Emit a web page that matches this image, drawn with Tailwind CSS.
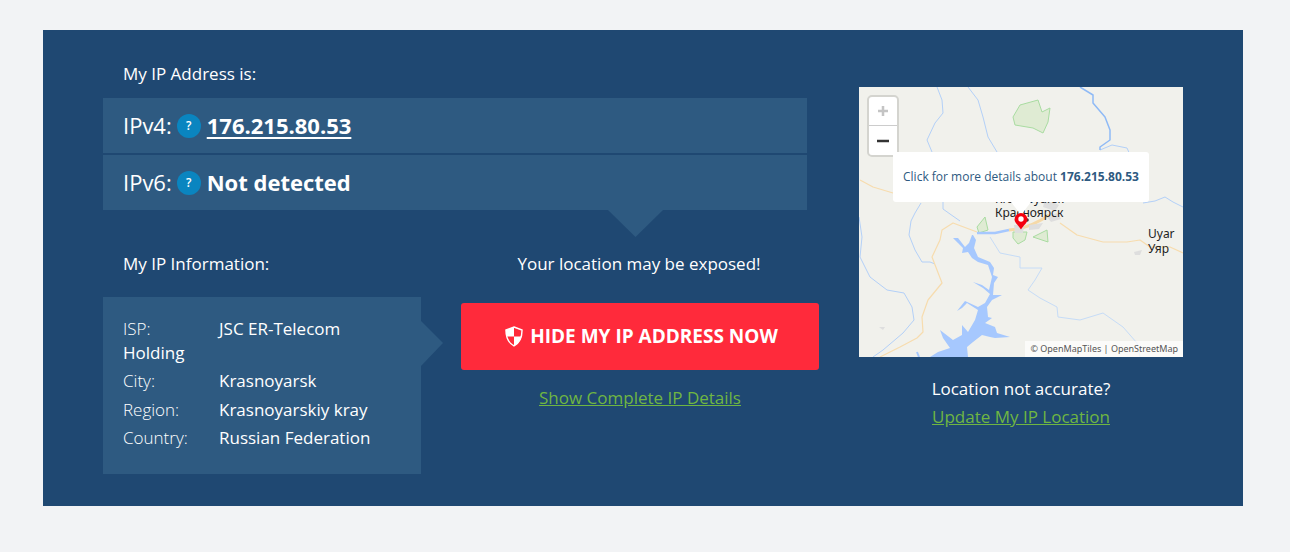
<!doctype html>
<html><head><meta charset="utf-8"><script src="https://cdn.jsdelivr.net/npm/@tailwindcss/browser@4"></script></head>
<body class="bg-[#f2f3f5] h-[552px] overflow-hidden font-['Open_Sans',sans-serif] text-white">
<div class="pt-[30px] pl-[43px]">
<section class="bg-[#1f4872] w-[1200px] h-[476px] pt-[32px] pl-[60px] flex">
  <div class="w-[716px] shrink-0">
    <div class="pl-[20px] text-[17px] leading-[24px]">My IP Address is:</div>
    <div class="w-[704px] mt-[12px] flex flex-col gap-[2px]">
      <div class="h-[55px] bg-[#2e5a81] pl-[20px] flex items-center text-[22px]">IPv4:<span class="ml-[5px] w-[24px] h-[24px] rounded-full bg-[#0a85c0] text-[12px] font-semibold flex items-center justify-center">?</span><a class="ml-[6px] font-bold text-[22px] underline underline-offset-[3px]">176.215.80.53</a></div>
      <div class="h-[55px] bg-[#2e5a81] pl-[20px] flex items-center text-[22px] relative">IPv6:<span class="ml-[5px] w-[24px] h-[24px] rounded-full bg-[#0a85c0] text-[12px] font-semibold flex items-center justify-center">?</span><b class="ml-[6px] font-bold text-[22px]">Not detected</b>
        <svg class="absolute left-[505px] top-[55px]" width="55" height="27"><path d="M0 0H55L27.500 27Z" fill="#2e5a81"/></svg>
      </div>
    </div>
    <div class="flex mt-[42px]">
      <div class="w-[358px] shrink-0">
        <div class="pl-[20px] text-[17px] leading-[24px]">My IP Information:</div>
        <div class="relative mt-[21px] w-[318px] h-[177px] bg-[#2e5a81] pl-[20px] pt-[20px] text-[17px]">
          <div class="leading-[24px]"><span class="inline-block w-[96px] font-light">ISP:</span>JSC ER-Telecom<br>Holding</div>
          <div class="leading-[24px] mt-[4px]"><span class="inline-block w-[96px] font-light">City:</span>Krasnoyarsk</div>
          <div class="leading-[24px] mt-[5px]"><span class="inline-block w-[96px] font-light">Region:</span>Krasnoyarskiy kray</div>
          <div class="leading-[24px] mt-[4px]"><span class="inline-block w-[96px] font-light">Country:</span>Russian Federation</div>
          <svg class="absolute left-[318px] top-[24px]" width="23" height="46"><path d="M0 0L22 22L0 45Z" fill="#2e5a81"/></svg>
        </div>
      </div>
      <div class="w-[358px] shrink-0 flex flex-col items-center">
        <div class="text-[17px] leading-[24px] ml-[-2px]">Your location may be exposed!</div>
        <a class="mt-[27px] w-[358px] h-[67px] rounded-[3px] bg-[#ff2a3b] flex items-center justify-center font-bold text-[19px] uppercase pl-[3px]">
          <svg class="mr-[7px]" width="18" height="21" viewBox="0 0 19 22"><path d="M9.500 1L18 4.200C18 11.500 16 17.500 9.500 21C3 17.500 1 11.500 1 4.200Z" fill="none" stroke="#fff" stroke-width="1.500"/><path d="M9.500 1L1 4.200C1 6.800 1.200 9 1.700 11H9.500ZM9.500 11V21C14.500 18.500 16.600 15 17.400 11Z" fill="#fff"/></svg>Hide my IP Address now</a>
        <a class="mt-[16px] text-[17px] leading-[24px] text-[#6fb642] underline">Show Complete IP Details</a>
      </div>
    </div>
  </div>
  <div class="ml-[40px] w-[324px] pt-[25px] flex flex-col items-center">
    <div class="relative w-[324px] h-[270px] bg-[#f1f1ec] overflow-hidden shrink-0">
      <svg class="absolute inset-0" width="324" height="270" viewBox="0 0 324 270" fill="none" stroke-linejoin="round">
        <g stroke="#b3d0f8" stroke-width="1">
          <path d="M78 0L83 13L84 26L76 36L68 53L73 65"/>
          <path d="M62 116L56 126L52 134L50 148L56 163L63 175L71 175L76 177"/>
          <path d="M109 0L119 13L124 30L129 50L138 65"/>
          <path d="M84 115L84 122L91 127L101 134"/>
          <path d="M253 58L268 61L272 70M241 63L253 58"/>
          <path d="M284 116L296 114L306 110L314 115L324 120"/>
          <path d="M0 130L3 150L1 170L11 190L28 203L45 206L53 220L55 233L44 246L24 263L14 270"/>
          <path d="M131 150L141 166L161 170L161 181L183 181L176 193L169 203L181 211L198 220L199 230L221 233L244 226L264 240L278 256L281 270" stroke="#c6dcf7"/>
        </g>
        <path d="M221 0L234 8L234 16L246 30L251 43L251 53L241 60L241 63" stroke="#8fbaf6" stroke-width="1.500"/>
        <g stroke="#f7dcae" stroke-width="1.200">
          <path d="M1 93L14 100L34 106"/>
          <path d="M118 145L94 136L83 143L81 153L73 170L78 183L83 196L69 213L63 230L64 245L58 251L41 260L21 270"/>
          <path d="M201 136L218 148L244 155L268 155L281 153L291 160L311 160L324 166"/>
        </g>
        <path fill="#a6c8fe" d="M114 148L117 153L115 161L119 170L131 175L135 181L134 188L139 190L135 196L134 208L143 208L133 213L128 220L129 230L133 231L126 236L136 240L138 246L151 250L136 251L131 250L123 248L114 255L108 260L109 270L71 270L79 265L91 261L84 251L81 243L94 253L103 248L103 238L109 245L116 233L119 223L108 216L103 221L98 224L106 214L119 220L126 216L131 207L124 201L114 195L123 198L130 203L133 190L129 178L119 175L113 171L109 165L103 166L104 161L99 156L94 151L99 151L106 160L110 156L113 148Z"/>
        <path d="M58 265L60 270" stroke="#a6c8fe" stroke-width="2"/>
        <g fill="#dfebd3" stroke="#a9dca1" stroke-width="1">
          <path d="M154 30L161 18L179 13L183 25L191 21L189 35L184 46L174 41L156 38Z"/>
          <path d="M118 140L126 130L129 143L120 146Z"/>
          <path d="M154 145L168 145L166 153L159 157L154 151Z"/>
          <path d="M174 150L188 143L189 155Z"/>
        </g>
        <path d="M118 146L136 146L150 143" stroke="#a6c8fe" stroke-width="2.500"/>
        <path d="M150 143C165 142 180 135 190 128" stroke="#f5d9a8" stroke-width="3"/>
        <g fill="#dedede">
          <path d="M186 112L200 118L196 124L184 120Z"/>
          <path d="M188 130L198 126L202 132L192 135Z"/>
          <path d="M170 138L184 136L180 142L170 143Z"/>
          <path d="M155 138L165 138L164 146L156 146Z"/>
          <path d="M275 165L283 163L281 168L276 168Z"/>
          <path d="M20 240L26 240L24 243Z"/>
        </g>
        <circle cx="168" cy="133" r="1.800" fill="#333"/>
      </svg>
      <span class="absolute left-[136px] top-[104px] text-[12px] leading-[16px] text-[#222] whitespace-nowrap font-['Noto_Sans',sans-serif]">Krasnoyarsk</span>
      <span class="absolute left-[136px] top-[118px] text-[12px] leading-[16px] text-[#222] whitespace-nowrap font-['Noto_Sans',sans-serif]">Красноярск</span>
      <span class="absolute left-[289px] top-[139px] text-[12px] leading-[15px] text-[#222] font-['Noto_Sans',sans-serif]">Uyar<br>Уяр</span>
      <span class="absolute right-0 bottom-0 h-[16px] px-[5px] bg-white/70 text-[9px] leading-[16px] text-[#555] whitespace-nowrap font-['Noto_Sans',sans-serif]">© OpenMapTiles | OpenStreetMap</span>
      <div class="absolute left-[8px] top-[8px] w-[32px] h-[62px] rounded-[5px] border-[2px] border-[#d4d4cf] bg-white flex flex-col">
        <div class="h-[29px] flex items-center justify-center text-[#c4c4c4] border-b border-[#ccc]"><svg width="12" height="12"><path d="M6 1V11M1 6H11" stroke="currentColor" stroke-width="2.500"/></svg></div>
        <div class="flex-1 flex items-center justify-center text-[#333]"><svg width="12" height="12"><path d="M0 6H12" stroke="currentColor" stroke-width="2.500"/></svg></div>
      </div>
      <div class="absolute left-[34px] top-[65px] w-[256px] h-[50px] rounded-[3px] bg-white flex items-center justify-center text-[12px] text-[#2e5a81] whitespace-nowrap">Click for more details about&nbsp;<b class="font-bold">176.215.80.53</b></div>
      <svg class="absolute left-[150px] top-[114px]" width="24" height="30" viewBox="0 0 24 30"><path d="M2 1H22L12 14Z" fill="#fff"/><path d="M12 28.500C9.500 24.500 5.500 21.500 5.500 18.500A6.500 6.500 0 0 1 18.500 18.500C18.500 21.500 14.500 24.500 12 28.500Z" fill="#f5000f"/><circle cx="12" cy="18" r="2.700" fill="#fff"/></svg>
    </div>
    <div class="mt-[20px] text-[17px] leading-[24px]">Location not accurate?</div>
    <a class="mt-[4px] text-[17px] leading-[24px] text-[#6fb642] underline">Update My IP Location</a>
  </div>
</section>
</div>
<h2 class="mt-[39px] w-[1140px] text-center text-[30px] leading-[40px] font-bold text-[#1f4872] whitespace-nowrap">What does your IP address say about you?</h2>
</body></html>
